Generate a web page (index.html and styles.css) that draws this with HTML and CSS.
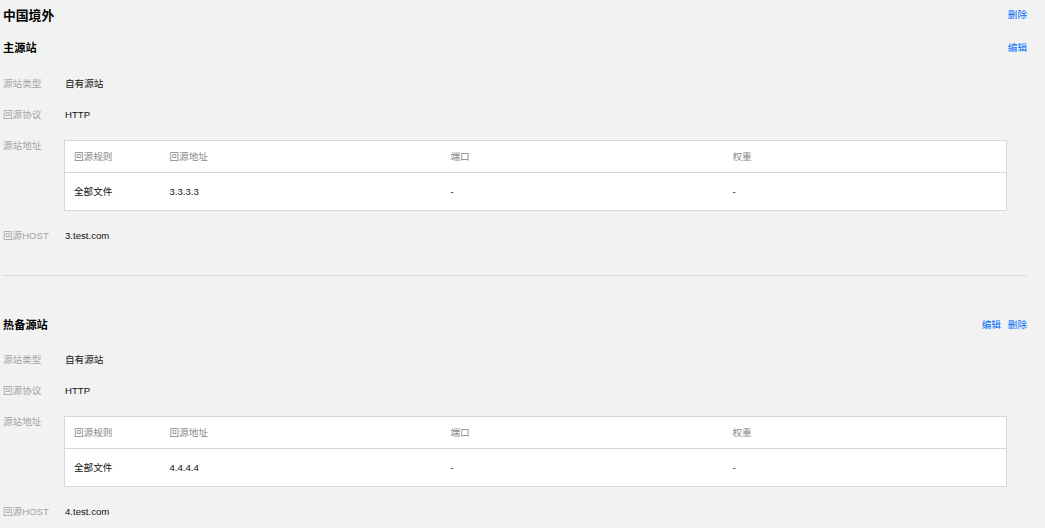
FILE: index.html
```html
<!DOCTYPE html>
<html lang="zh-CN">
<head>
    <meta charset="UTF-8">
    <title>中国境外</title>
    <link rel="stylesheet" href="styles.css">
</head>
<body>
    <div class="page">
        <div class="head">
            <h2>中国境外</h2>
            <div class="links"><a href="#">删除</a></div>
        </div>

        <div class="sub-head">
            <h3>主源站</h3>
            <div class="links"><a href="#">编辑</a></div>
        </div>
        <div class="info">
            <div class="row"><span class="label">源站类型</span><span class="value">自有源站</span></div>
            <div class="row"><span class="label">回源协议</span><span class="value">HTTP</span></div>
            <div class="row">
                <span class="label">源站地址</span>
                <table class="origin-table">
                    <colgroup><col class="c1"><col class="c2"><col class="c3"><col></colgroup>
                    <thead><tr><th>回源规则</th><th>回源地址</th><th>端口</th><th>权重</th></tr></thead>
                    <tbody><tr><td>全部文件</td><td>3.3.3.3</td><td>-</td><td>-</td></tr></tbody>
                </table>
            </div>
            <div class="row"><span class="label">回源HOST</span><span class="value">3.test.com</span></div>
        </div>

        <hr class="divider">

        <div class="sub-head second">
            <h3>热备源站</h3>
            <div class="links"><a href="#">编辑</a><a href="#">删除</a></div>
        </div>
        <div class="info second">
            <div class="row"><span class="label">源站类型</span><span class="value">自有源站</span></div>
            <div class="row"><span class="label">回源协议</span><span class="value">HTTP</span></div>
            <div class="row">
                <span class="label">源站地址</span>
                <table class="origin-table">
                    <colgroup><col class="c1"><col class="c2"><col class="c3"><col></colgroup>
                    <thead><tr><th>回源规则</th><th>回源地址</th><th>端口</th><th>权重</th></tr></thead>
                    <tbody><tr><td>全部文件</td><td>4.4.4.4</td><td>-</td><td>-</td></tr></tbody>
                </table>
            </div>
            <div class="row"><span class="label">回源HOST</span><span class="value">4.test.com</span></div>
        </div>
    </div>
</body>
</html>
```

FILE: styles.css
```css
body {
    margin: 0;
    background-color: #f2f2f2;
    font-family: "Liberation Sans", "Noto Sans CJK SC", sans-serif;
    font-size: 9.6px;
    color: #000;
}
.page {
    width: 1024px;
    padding-left: 3px;
}
.head, .sub-head {
    display: flex;
    justify-content: space-between;
    align-items: center;
    height: 28px;
}
.head h2 {
    margin: 0;
    font-size: 12.8px;
    font-weight: bold;
}
.sub-head {
    margin-top: 5px;
}
.sub-head.second {
    margin-top: 34px;
}
.sub-head h3 {
    margin: 0;
    font-size: 11.2px;
    font-weight: bold;
}
.links {
    display: flex;
    gap: 7px;
}
.links a {
    color: #006eff;
    text-decoration: none;
}
.info {
    margin-top: 7px;
}
.info.second {
    margin-top: 6px;
}
.row {
    display: flex;
    align-items: flex-start;
    padding: 10px 0 9px;
    line-height: 12px;
}
.label {
    width: 62px;
    flex-shrink: 0;
    color: #a3a3a3;
}
.value {
    color: #111;
}
.origin-table {
    width: 943px;
    margin-left: -1px;
    border-collapse: collapse;
    table-layout: fixed;
    background-color: #fff;
    border: 1px solid #d1d8e3;
}
.origin-table col.c1 {
    width: 96px;
}
.origin-table col.c2 {
    width: 281px;
}
.origin-table col.c3 {
    width: 282px;
}
.origin-table th {
    height: 31px;
    padding: 0 9px;
    text-align: left;
    font-weight: normal;
    color: #888;
    border-bottom: 1px solid #d1d8e3;
}
.origin-table td {
    height: 37px;
    padding: 0 9px;
    color: #111;
}
.divider {
    margin: 24px 0 0;
    border: 0;
    border-top: 1px solid #dcdcdc;
}
```
